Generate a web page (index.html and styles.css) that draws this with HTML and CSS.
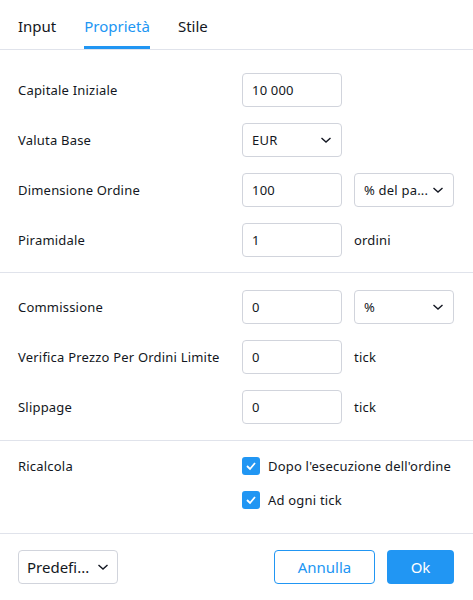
FILE: index.html
```html
<!DOCTYPE html>
<html lang="it">
<head>
<meta charset="utf-8">
<link rel="stylesheet" href="styles.css">
</head>
<body>
<div class="dialog">
  <div class="tabs">
    <div class="tab">Input</div>
    <div class="tab active">Proprietà</div>
    <div class="tab">Stile</div>
  </div>

  <div class="section s1">
    <div class="row">
      <div class="label">Capitale Iniziale</div>
      <div class="field">10 000</div>
    </div>
    <div class="row">
      <div class="label">Valuta Base</div>
      <div class="field select"><span>EUR</span><svg class="chev" width="12" height="8" viewBox="0 0 12 8"><path d="M1.5 2 L6 6 L10.5 2" fill="none" stroke="#131722" stroke-width="1.4"/></svg></div>
    </div>
    <div class="row">
      <div class="label">Dimensione Ordine</div>
      <div class="field">100</div>
      <div class="field select"><span>% del pa...</span><svg class="chev" width="12" height="8" viewBox="0 0 12 8"><path d="M1.5 2 L6 6 L10.5 2" fill="none" stroke="#131722" stroke-width="1.4"/></svg></div>
    </div>
    <div class="row">
      <div class="label">Piramidale</div>
      <div class="field">1</div>
      <div class="unit">ordini</div>
    </div>
  </div>

  <div class="section s2">
    <div class="row">
      <div class="label">Commissione</div>
      <div class="field">0</div>
      <div class="field select"><span>%</span><svg class="chev" width="12" height="8" viewBox="0 0 12 8"><path d="M1.5 2 L6 6 L10.5 2" fill="none" stroke="#131722" stroke-width="1.4"/></svg></div>
    </div>
    <div class="row">
      <div class="label">Verifica Prezzo Per Ordini Limite</div>
      <div class="field">0</div>
      <div class="unit">tick</div>
    </div>
    <div class="row">
      <div class="label">Slippage</div>
      <div class="field">0</div>
      <div class="unit">tick</div>
    </div>
  </div>

  <div class="section s3">
    <div class="label rlabel">Ricalcola</div>
    <div class="checks">
      <div class="check"><span class="box"><svg width="12" height="10" viewBox="0 0 12 10"><path d="M2 5 L5 8 L10 2" fill="none" stroke="#fff" stroke-width="1.8"/></svg></span>Dopo l'esecuzione dell'ordine</div>
      <div class="check"><span class="box"><svg width="12" height="10" viewBox="0 0 12 10"><path d="M2 5 L5 8 L10 2" fill="none" stroke="#fff" stroke-width="1.8"/></svg></span>Ad ogni tick</div>
    </div>
  </div>

  <div class="footer">
    <div class="btn preset"><span>Predefi...</span><svg class="chev" width="12" height="8" viewBox="0 0 12 8"><path d="M1.5 2 L6 6 L10.5 2" fill="none" stroke="#131722" stroke-width="1.4"/></svg></div>
    <div class="spacer"></div>
    <div class="btn cancel">Annulla</div>
    <div class="btn ok">Ok</div>
  </div>
</div>
</body>
</html>
```

FILE: styles.css
```css
* { box-sizing: border-box; }
html, body { margin: 0; padding: 0; background: #fff; }
body {
  font-family: "Noto Sans", "DejaVu Sans", sans-serif;
  font-size: 13px;
  letter-spacing: 0.2px;
  color: #131722;
}
.dialog {
  width: 473px;
  height: 600px;
  border-radius: 0 0 6px 6px;
  overflow: hidden;
  background: #fff;
}
.tabs {
  height: 50px;
  display: flex;
  padding-left: 18px;
  gap: 28px;
  border-bottom: 1px solid #e0e3eb;
}
.tab {
  font-size: 15px;
  letter-spacing: 0;
  line-height: 20px;
  padding-top: 16px;
  height: 49px;
  color: #131722;
}
.tab.active {
  color: #2196f3;
  border-bottom: 3px solid #2196f3;
}
.section {
  border-bottom: 1px solid #e0e3eb;
  padding-left: 18px;
  padding-right: 20px;
}
.s1 { padding-top: 23px; padding-bottom: 15px; display: flex; flex-direction: column; gap: 16px; height: 223px; }
.s2 { padding-top: 17px; padding-bottom: 16px; display: flex; flex-direction: column; gap: 16px; height: 168px; }
.row {
  display: flex;
  align-items: center;
  height: 34px;
}
.label {
  width: 224px;
  flex: none;
  white-space: nowrap;
}
.field {
  width: 100px;
  height: 34px;
  border: 1px solid #d1d4dc;
  border-radius: 4px;
  padding: 0 9px;
  display: flex;
  align-items: center;
  flex: none;
}
.field + .field { margin-left: 12px; }
.select { justify-content: space-between; padding-right: 9px; }
.chev { flex: none; }
.unit { margin-left: 12px; }
.s3 {
  height: 93px;
  display: flex;
  padding-top: 16px;
}
.rlabel { line-height: 18px; }
.checks { display: flex; flex-direction: column; gap: 16px; }
.check { display: flex; align-items: center; height: 18px; white-space: nowrap; }
.box {
  width: 18px; height: 18px;
  border-radius: 3px;
  background: #2196f3;
  display: flex; align-items: center; justify-content: center;
  margin-right: 8px;
}
.footer {
  display: flex;
  align-items: center;
  padding: 16px 19px 0 18px;
}
.spacer { flex: 1; }
.btn {
  height: 34px;
  border-radius: 4px;
  display: flex;
  align-items: center;
  font-size: 15px;
  letter-spacing: 0;
}
.preset {
  width: 100px;
  border: 1px solid #d1d4dc;
  padding: 0 8px 0 8px;
  justify-content: space-between;
}
.cancel {
  width: 101px;
  border: 1px solid #2196f3;
  color: #2196f3;
  justify-content: center;
  margin-right: 12px;
}
.ok {
  width: 67px;
  background: #2196f3;
  color: #fff;
  justify-content: center;
}
```
